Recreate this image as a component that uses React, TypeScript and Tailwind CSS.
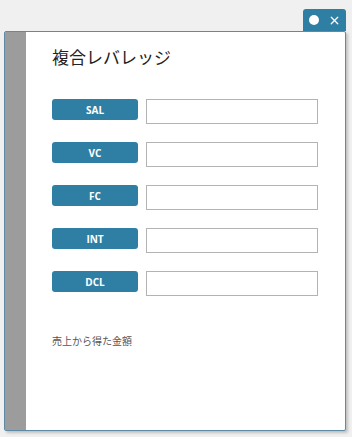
import { X } from 'lucide-react'

const rows = ['SAL', 'VC', 'FC', 'INT', 'DCL']

export default function App() {
  return (
    <div className="w-[352px] h-[437px] bg-[#f0f0f0] pt-[9px] pl-[4px] font-['Open_Sans','Noto_Sans_CJK_JP',sans-serif]">
      <div className="w-[342px] flex justify-end">
        <div className="w-[43px] h-[22px] bg-[#2f7fa5] rounded-t-[3px] flex items-center justify-between pl-[6px] pr-[5px]">
          <span className="w-[10px] h-[10px] rounded-full bg-white" />
          <X size={13} strokeWidth={2.2} className="text-white" />
        </div>
      </div>
      <div className="w-[342px] h-[400px] bg-white border border-[#5f8aa6] rounded-[2px] shadow-[2px_2px_3px_rgba(0,0,0,0.2)] flex">
        <div className="w-[21px] bg-[#9c9c9c] shrink-0" />
        <div className="flex-1 pl-[26px] pt-[13px]">
          <h1 className="text-[17px] leading-[24px] text-[#222] font-['Noto_Sans_CJK_JP',sans-serif]">複合レバレッジ</h1>
          <div className="mt-[30px] flex flex-col gap-[18px]">
            {rows.map((r) => (
              <div key={r} className="flex items-start gap-[8px]">
                <div className="w-[86px] h-[21px] bg-[#2f7fa5] rounded-[3px] flex items-center justify-center pt-px text-white text-[10px] font-bold">
                  {r}
                </div>
                <input className="w-[172px] h-[25px] border border-[#b3b3b3] bg-white outline-none" />
              </div>
            ))}
          </div>
          <p className="mt-[37px] text-[10px] text-[#555] font-['Noto_Sans_CJK_JP',sans-serif]">売上から得た金額</p>
        </div>
      </div>
    </div>
  )
}
